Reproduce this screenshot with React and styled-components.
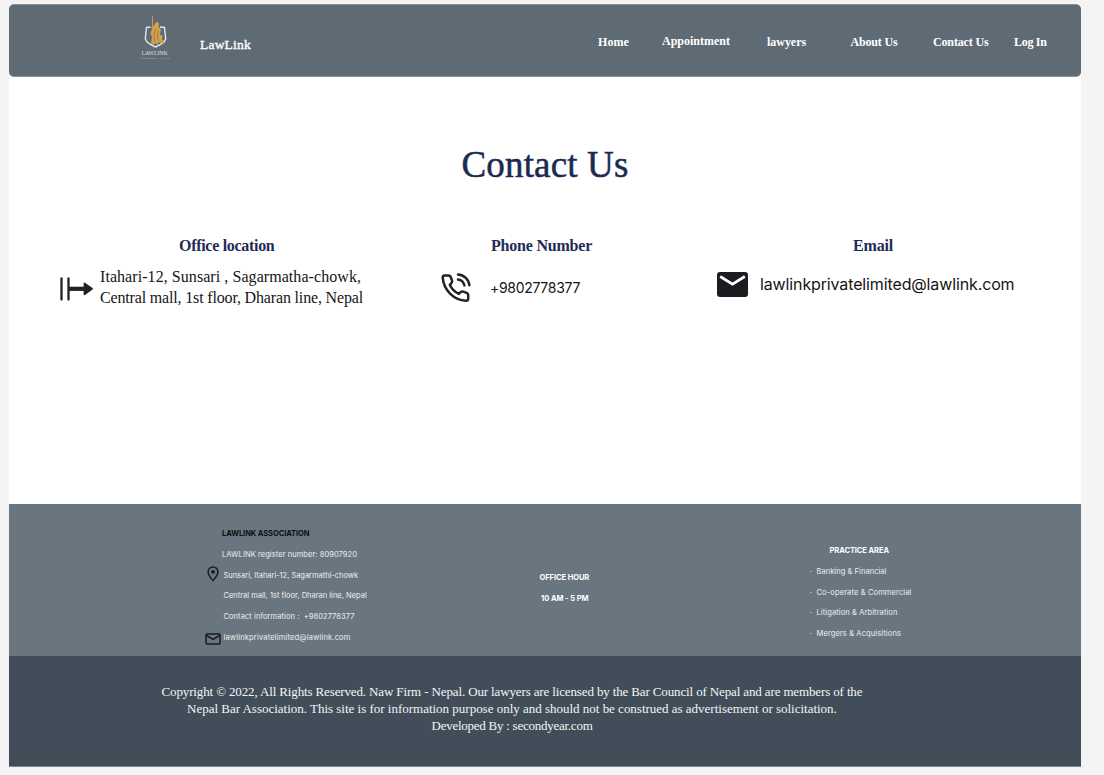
import React from "react";
import styled, { createGlobalStyle } from "styled-components";

const serif = `"Liberation Serif", serif`;
const sans = `Inter, sans-serif`;

const GlobalStyle = createGlobalStyle`
  * { box-sizing: border-box; }
  body { margin: 0; background: #f4f4f4; overflow: hidden; }
  h1, h2, h3, p, ul { margin: 0; padding: 0; }
`;

const Page = styled.div`
  width: 1072px;
  height: 763px;
  margin: 4px 0 0 9px;
  background: #fff;
  display: flex;
  flex-direction: column;
`;

const Header = styled.header`
  height: 72.5px;
  flex: none;
  background: #5f6b74;
  border: solid #87919a;
  border-width: 1px 0;
  border-radius: 5px;
  display: flex;
  align-items: flex-start;
  color: #fff;
  font-family: ${serif};
`;

const Logo = styled.svg`
  flex: none;
  width: 34px;
  height: 46px;
  margin: 10px 0 0 129px;
`;

const Brand = styled.span`
  width: 51px;
  margin: 29.5px 0 0 28px;
  font-size: 13.5px;
  line-height: 20px;
  letter-spacing: 0.2px;
  -webkit-text-stroke: 0.35px #fff;
`;

const Nav = styled.nav`
  display: flex;
  margin: 26.5px 0 0 347px;
`;

const NavLink = styled.a`
  width: ${(p) => p.$slot}px;
  margin-top: ${(p) => (p.$raised ? -1 : 0)}px;
  font-size: 12px;
  font-weight: 700;
  line-height: 20px;
  letter-spacing: ${(p) => p.$track || 0}px;
  white-space: nowrap;
`;

const Main = styled.main`
  height: 427px;
  flex: none;
  padding-top: 66.5px;
`;

const Title = styled.h1`
  padding-left: 452.5px;
  font: 400 37px/44px ${serif};
  letter-spacing: 0.155px;
  color: #1b2a52;
  -webkit-text-stroke: 0.5px #1b2a52;
`;

const Contacts = styled.div`
  display: flex;
  padding: 48.5px 0 0 50px;
`;

const Contact = styled.section`
  width: ${(p) => p.$width}px;
`;

const ContactHeading = styled.h2`
  padding-left: ${(p) => p.$indent}px;
  font: 700 16px/20px ${serif};
  letter-spacing: ${(p) => p.$track}px;
  color: #1f2c56;
`;

const ContactBody = styled.div`
  display: flex;
  align-items: flex-start;
  margin-top: ${(p) => p.$gap}px;
`;

const ContactText = styled.p`
  margin: ${(p) => p.$top || 0}px 0 0 ${(p) => p.$left}px;
  font-family: ${(p) => (p.$sans ? sans : serif)};
  font-size: ${(p) => p.$size}px;
  line-height: ${(p) => p.$line}px;
  letter-spacing: ${(p) => p.$track || 0}px;
  color: #151515;
  white-space: nowrap;
`;

const Tracked = styled.span`
  display: block;
  letter-spacing: ${(p) => p.$track}px;
`;

const Info = styled.section`
  height: 152px;
  flex: none;
  background: #6a767f;
  display: flex;
  color: #eceff1;
  font: 400 7.5px/20.9px ${sans};
  white-space: pre;
`;

const InfoColumn = styled.div`
  width: ${(p) => p.$width}px;
  padding: ${(p) => p.$top}px 0 0 ${(p) => p.$left}px;
`;

const InfoHeading = styled.h3`
  padding-left: ${(p) => p.$indent || 0}px;
  font-size: 7.5px;
  font-weight: 700;
  letter-spacing: -0.06px;
  color: ${(p) => (p.$dark ? "#0c0e10" : "#fff")};
`;

const InfoRow = styled.p`
  display: flex;
  height: 20.8px;
  letter-spacing: ${(p) => p.$track || 0}px;
`;

const IconSlot = styled.span`
  flex: none;
  width: ${(p) => p.$width}px;
  padding-top: ${(p) => p.$drop || 0}px;
  display: flex;
  align-items: flex-start;
`;

const Bullet = styled.span`
  width: 6.5px;
`;

const Legal = styled.footer`
  flex: 1;
  padding: 27.5px 0 0;
  background: #414e59;
  border-bottom: 1px solid #7b868e;
  color: #f3f4f5;
  font: 400 13px/17px ${serif};
`;

const LegalLine = styled.p`
  padding-left: ${(p) => p.$left}px;
  letter-spacing: ${(p) => p.$track}px;
  white-space: nowrap;
`;

const LawLogo = () => (
  <Logo viewBox="0 0 34 46">
    <path d="M12.500 12 8.500 12.500 7.300 24c1.500 4 5.500 6 10.200 8 4.700-2 8.700-4 10.200-8L26.500 12.500 22 12" fill="none" stroke="#e3e6e8" strokeWidth="1.400" />
    <path d="M14.500 1v13" stroke="#c99d50" strokeWidth="1" />
    <path d="M17 8.500 19 6.500l2 2-.5 3 2.500 3-1 4 2.500 7-2 2.500-2-1-.8 3-2.200-2-2 2-2.500-1.500 1-7-1.700-3 1.700-4-1-2 2-.5z" fill="#d0a14b" />
    <path d="M17.500 14l-1.500 6 1 7M20 16l-.5 6 1.500 4" stroke="#776c55" strokeWidth="0.600" fill="none" />
    <path d="M23.500 20v4M23 27.500h4M25 25v4" stroke="#e0ac48" strokeWidth="1.200" />
    <text x="3.500" y="39.600" textLength="26" lengthAdjust="spacingAndGlyphs" fill="#dce0e2" fontFamily="Liberation Serif" fontSize="6.600">LAWLINK</text>
    <text x="2" y="43.500" textLength="30" lengthAdjust="spacingAndGlyphs" fill="#aab2b8" fontFamily="Liberation Sans" fontSize="2.500">ATTORNEY AT LAW</text>
  </Logo>
);

const StartArrow = () => (
  <svg width="35" height="24" viewBox="0 0 35 24" fill="none" stroke="#222" strokeLinecap="round">
    <path d="M2.500 1.500v21M9.500 1.500v21" strokeWidth="2.300" />
    <path d="M10 11.800h17" strokeWidth="4.200" strokeLinecap="butt" />
    <path d="M25.500 6.500 33 11.800l-7.500 5.500z" fill="#222" strokeWidth="1.800" strokeLinejoin="round" />
  </svg>
);

const PhoneCall = () => (
  <svg width="32" height="32" viewBox="0 0 32 32" fill="none" stroke="#222" strokeWidth="2.500" strokeLinecap="round" strokeLinejoin="round">
    <path d="M3.500 3.500H7.500C8.600 3.500 9.300 4 9.700 5l1.300 3.400c.4 1.100.2 1.900-.6 2.700L8.800 12.800c1.800 4.100 5 7.300 9.100 9.100l1.700-1.700c.8-.8 1.600-1 2.700-.6l3.400 1.300c1 .4 1.500 1.100 1.500 2.200v3.700c0 1.300-.9 2.100-2.200 2C12.600 28 2.700 18.100 1.700 5.700 1.600 4.400 2.300 3.500 3.500 3.500z" />
    <path d="M17 2.500c6.200.4 10.800 5 11.300 10.700M17 7.600c3.400.5 5.700 2.600 6.400 5.800" />
  </svg>
);

const MailSolid = () => (
  <svg width="31" height="25" viewBox="0 0 31 25">
    <rect width="31" height="25" rx="3" fill="#1d1b20" />
    <path d="M3.200 4.500 15.500 12.200 27.800 4.500" fill="none" stroke="#fff" strokeWidth="2.700" />
  </svg>
);

const Pin = () => (
  <svg width="12" height="16" viewBox="0 0 12 16">
    <path d="M6 1C3.200 1 1.100 3.100 1.100 5.900 1.100 9.200 6 14.500 6 14.500s4.900-5.300 4.900-8.600C10.900 3.100 8.800 1 6 1z" fill="none" stroke="#1d1b20" strokeWidth="1.500" />
    <circle cx="6" cy="5.800" r="1.900" fill="#1d1b20" />
  </svg>
);

const MailOutline = () => (
  <svg width="16" height="12" viewBox="0 0 16 12" fill="none" stroke="#1d1b20" strokeWidth="1.500">
    <rect x="1" y="1" width="14" height="10" rx="0.800" />
    <path d="M1.500 2.500 8 6.400l6.500-3.900" />
  </svg>
);

const links = [
  { label: "Home", slot: 64, track: 0.08 },
  { label: "Appointment", slot: 105, raised: true },
  { label: "lawyers", slot: 83.5, track: -0.04 },
  { label: "About Us", slot: 82.5, track: -0.16 },
  { label: "Contact Us", slot: 81, track: -0.15 },
  { label: "Log In", slot: 40, track: -0.3 },
];

const practice = [
  ["Banking & Financial", 0.05],
  ["Co-operate & Commercial", 0.13],
  ["Litigation & Arbitration", 0.1],
  ["Mergers & Acquisitions", 0.12],
];

export default function App() {
  return (
    <>
      <GlobalStyle />
      <Page>
        <Header>
          <LawLogo />
          <Brand>LawLink</Brand>
          <Nav>
            {links.map((l) => (
              <NavLink key={l.label} $slot={l.slot} $track={l.track} $raised={l.raised}>{l.label}</NavLink>
            ))}
          </Nav>
        </Header>

        <Main>
          <Title>Contact Us</Title>
          <Contacts>
            <Contact $width={382}>
              <ContactHeading $indent={120} $track={-0.3}>Office location</ContactHeading>
              <ContactBody $gap={10}>
                <IconSlot $width={35} $drop={11}><StartArrow /></IconSlot>
                <ContactText $left={6} $size={16} $line={21}>
                  <Tracked $track={0.062}>Itahari-12, Sunsari , Sagarmatha-chowk,</Tracked>
                  <Tracked $track={-0.162}>Central mall, 1st floor, Dharan line, Nepal</Tracked>
                </ContactText>
              </ContactBody>
            </Contact>
            <Contact $width={276}>
              <ContactHeading $indent={50} $track={-0.21}>Phone Number</ContactHeading>
              <ContactBody $gap={16}>
                <PhoneCall />
                <ContactText $sans $top={6.5} $left={17} $size={14} $line={20} $track={-0.3}>+9802778377</ContactText>
              </ContactBody>
            </Contact>
            <Contact $width={300}>
              <ContactHeading $indent={136} $track={-0.18}>Email</ContactHeading>
              <ContactBody $gap={16}>
                <MailSolid />
                <ContactText $sans $top={2.5} $left={12} $size={16} $line={20} $track={-0.13}>lawlinkprivatelimited@lawlink.com</ContactText>
              </ContactBody>
            </Contact>
          </Contacts>
        </Main>

        <Info>
          <InfoColumn $width={530.5} $top={20.3} $left={196}>
            <InfoHeading $dark $indent={17}>LAWLINK ASSOCIATION</InfoHeading>
            <InfoRow $track={0.067}><IconSlot $width={17} />LAWLINK register number: 80907920</InfoRow>
            <InfoRow $track={-0.027}><IconSlot $width={2} /><IconSlot $width={16.5} $drop={0.5}><Pin /></IconSlot>Sunsari, Itahari-12, Sagarmathi-chowk</InfoRow>
            <InfoRow><IconSlot $width={18.5} />Central mall, 1st floor, Dharan line, Nepal</InfoRow>
            <InfoRow $track={0.069}><IconSlot $width={18.5} />Contact information :  +9802778377</InfoRow>
            <InfoRow $track={0.173}><IconSlot $width={18.5} $drop={5}><MailOutline /></IconSlot>lawlinkprivatelimited@lawlink.com</InfoRow>
          </InfoColumn>
          <InfoColumn $width={270.5} $top={64.3} $left={0}>
            <InfoHeading>OFFICE HOUR</InfoHeading>
            <InfoHeading $indent={1.5}>10 AM - 5 PM</InfoHeading>
          </InfoColumn>
          <InfoColumn $width={200} $top={37.3} $left={0}>
            <InfoHeading $indent={19.5}>PRACTICE AREA</InfoHeading>
            <ul>
              {practice.map(([label, track]) => (
                <InfoRow as="li" key={label} $track={track}><Bullet>·</Bullet>{label}</InfoRow>
              ))}
            </ul>
          </InfoColumn>
        </Info>

        <Legal>
          <LegalLine $left={152.5} $track={-0.134}>Copyright © 2022, All Rights Reserved. Naw Firm - Nepal. Our lawyers are licensed by the Bar Council of Nepal and are members of the</LegalLine>
          <LegalLine $left={178} $track={-0.01}>Nepal Bar Association. This site is for information purpose only and should not be construed as advertisement or solicitation.</LegalLine>
          <LegalLine $left={422.5} $track={-0.249}>Developed By : secondyear.com</LegalLine>
        </Legal>
      </Page>
    </>
  );
}
